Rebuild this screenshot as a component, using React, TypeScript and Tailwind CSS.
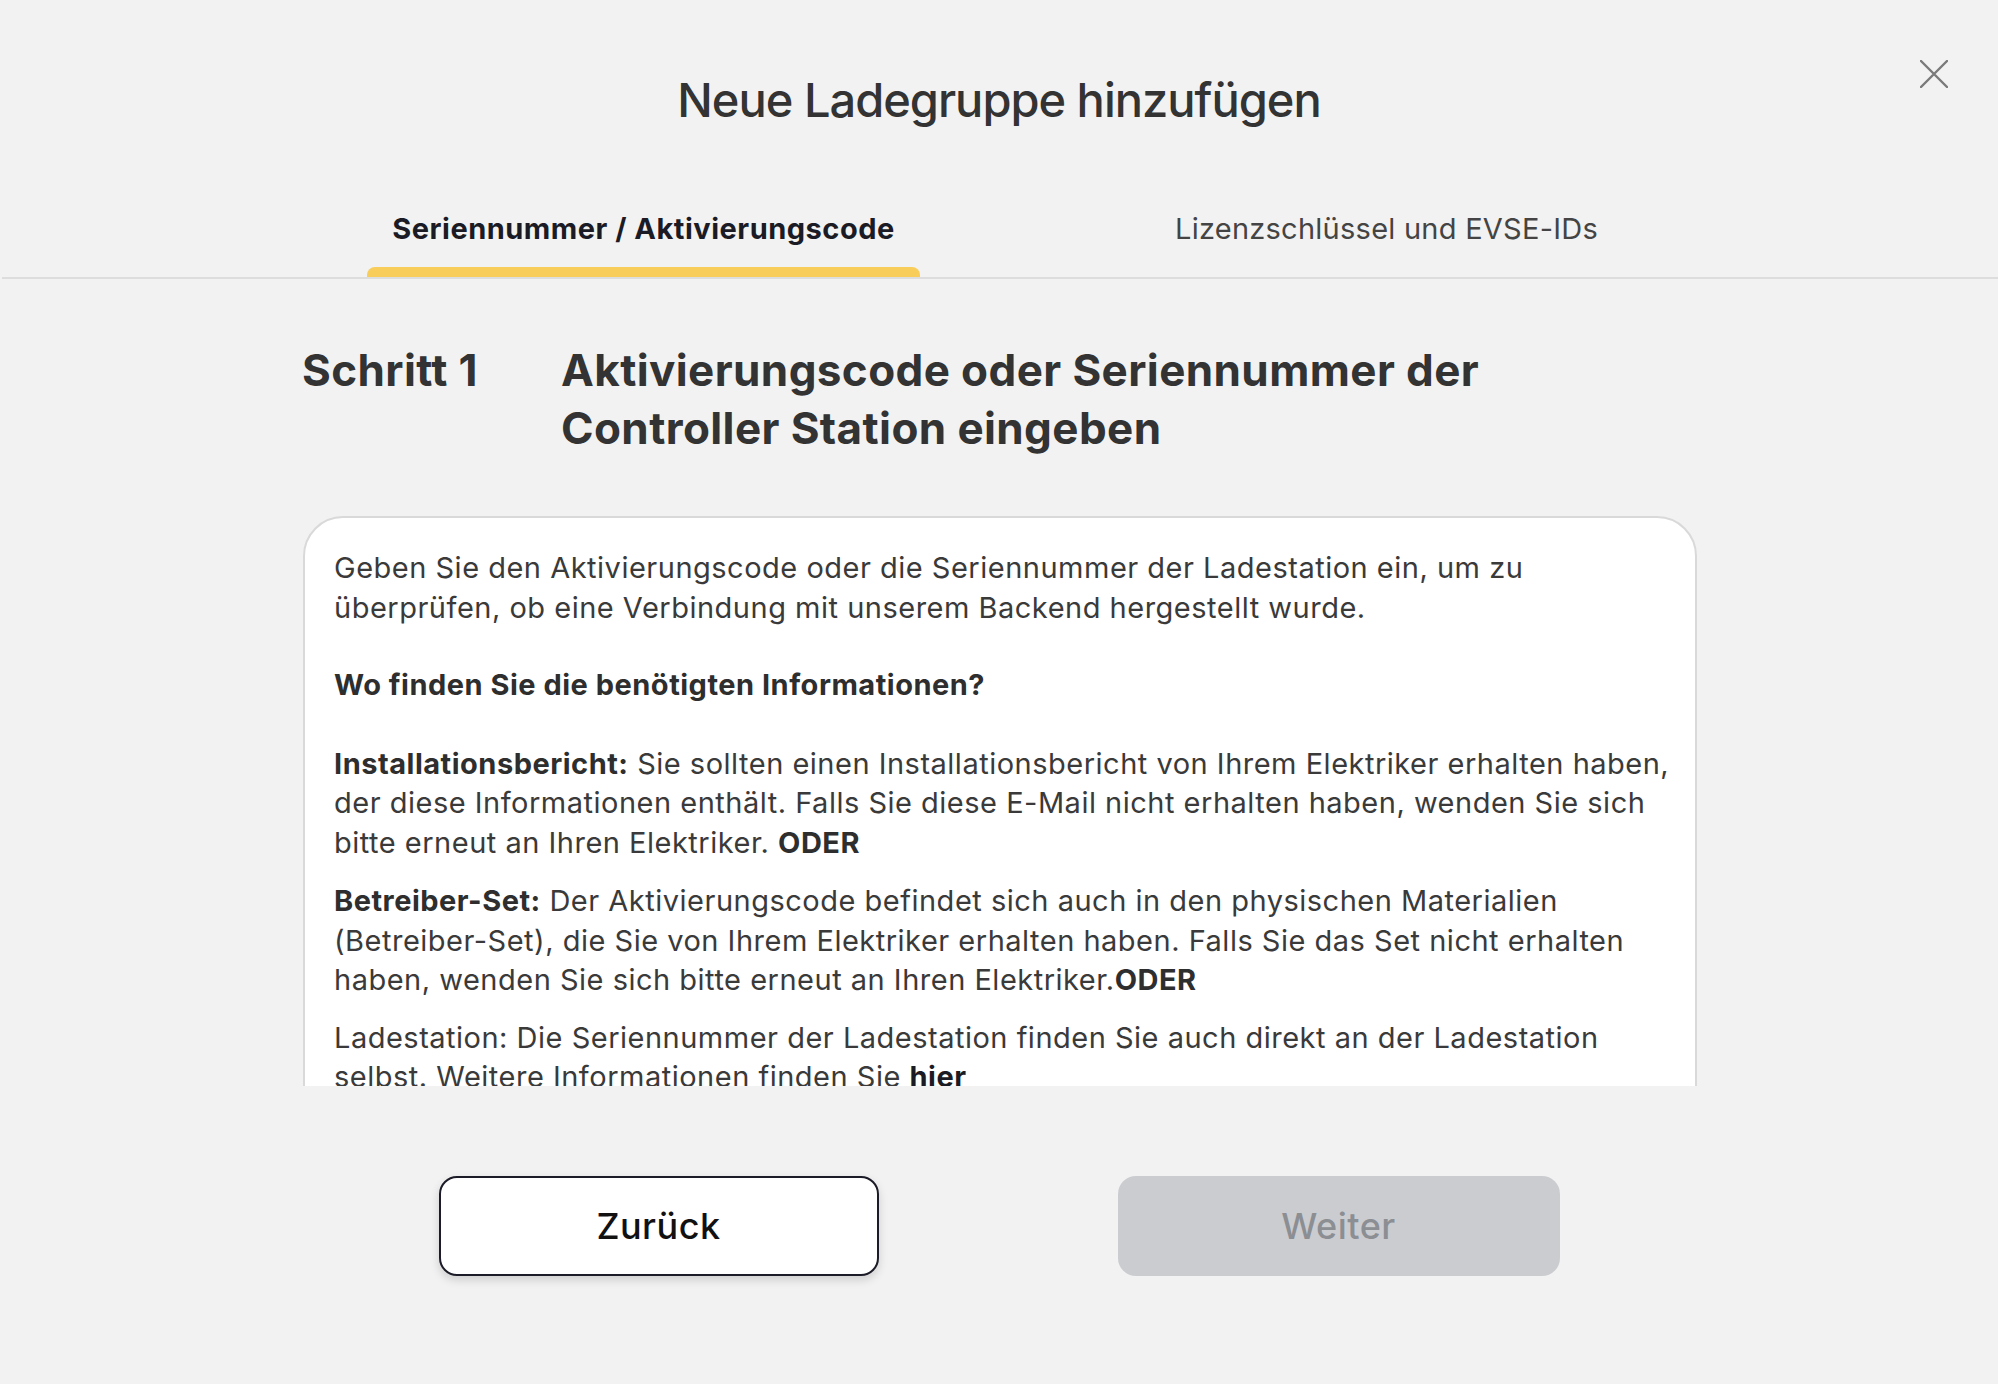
import React from 'react'

// ─────────────────────────────────────────────────────────────────────────────
// Neue Ladegruppe hinzufügen – step 1 of the add-charging-group dialog
// ─────────────────────────────────────────────────────────────────────────────

const font = { fontFamily: 'Inter, "Noto Sans", "Liberation Sans", sans-serif' }

const CloseIcon: React.FC = () => (
  <svg width="28" height="28" viewBox="0 0 28 28" fill="none">
    <path d="M1 1 L27 27 M27 1 L1 27" stroke="#7a7a7a" strokeWidth="2.4" strokeLinecap="round" />
  </svg>
)

const App: React.FC = () => {
  return (
    <div className="relative w-[1998px] h-[1384px] bg-[#f2f2f2] text-[#333333] overflow-hidden" style={font}>
      <button className="absolute top-[60px] right-[50px]">
        <CloseIcon />
      </button>

      {/* title */}
      <h1 className="pt-[72px] text-center text-[47px] leading-[56px] font-medium tracking-[-1px] text-[#333333]">
        Neue Ladegruppe hinzufügen
      </h1>

      {/* tabs */}
      <div className="mt-[83px] ml-[2px] flex border-b-2 border-[#dddddd]">
        <div className="ml-[365px] flex gap-[190px]">
          <div className="w-[553px] flex flex-col items-center">
            <span className="text-[29px] leading-[36px] font-bold tracking-[0.5px] text-[#1b1b25]">
              Seriennummer / Aktivierungscode
            </span>
            <div className="mt-[20px] h-[10px] w-full rounded-t-[8px] bg-[#f8cd5a]" />
          </div>
          <div className="w-[553px] flex flex-col items-center">
            <span className="text-[29px] leading-[36px] font-normal tracking-[0.25px] text-[#444444]">
              Lizenzschlüssel und EVSE-IDs
            </span>
            <div className="mt-[20px] h-[10px]" />
          </div>
        </div>
      </div>

      {/* step header */}
      <div className="mt-[62px] pl-[302px] flex">
        <div className="w-[259px] text-[44px] leading-[58px] font-bold tracking-[0.4px]">Schritt 1</div>
        <h2 className="w-[960px] text-[44px] leading-[58px] font-bold tracking-[0.4px]">
          Aktivierungscode oder Seriennummer der Controller Station eingeben
        </h2>
      </div>

      <div className="mt-[59px] ml-[303px] w-[1394px] h-[570px] overflow-hidden">
        <div className="rounded-[40px] border-2 border-[#d9d9d9] bg-white pl-[29px] pr-[16px] pt-[30px] pb-[40px] text-[29px] leading-[39.5px] tracking-[0.5px] text-[#3a3a3a]">
          <p className="mb-[38px]">
            Geben Sie den Aktivierungscode oder die Seriennummer der Ladestation ein, um zu überprüfen, ob
            eine Verbindung mit unserem Backend hergestellt wurde.
          </p>
          <p className="mb-[39px] font-bold text-[#2e2e2e]">Wo finden Sie die benötigten Informationen?</p>
          <p className="mb-[19px]">
            <b className="text-[#2e2e2e]">Installationsbericht:</b> Sie sollten einen Installationsbericht von
            Ihrem Elektriker erhalten haben, der diese Informationen enthält. Falls Sie diese E-Mail nicht
            erhalten haben, wenden Sie sich bitte erneut an Ihren Elektriker. <b className="text-[#2e2e2e]">ODER</b>
          </p>
          <p className="mb-[18px]">
            <b className="text-[#2e2e2e]">Betreiber-Set:</b> Der Aktivierungscode befindet sich auch in den
            physischen Materialien (Betreiber-Set), die Sie von Ihrem Elektriker erhalten haben. Falls Sie das
            Set nicht erhalten haben, wenden Sie sich bitte erneut an Ihren Elektriker.
            <b className="text-[#2e2e2e]">ODER</b>
          </p>
          <p>
            Ladestation: Die Seriennummer der Ladestation finden Sie auch direkt an der Ladestation selbst.
            Weitere Informationen finden Sie <b className="text-[#1b1b25]">hier</b>
          </p>
        </div>
      </div>

      {/* footer buttons */}
      <div className="mt-[90px] flex justify-center gap-[239px]">
        <button className="w-[440px] h-[100px] rounded-[18px] border-2 border-[#1c1c28] bg-white text-[36px] font-medium tracking-[0.5px] text-[#111111] shadow-[0_4px_10px_rgba(0,0,0,0.15)]">
          Zurück
        </button>
        <button className="w-[442px] h-[100px] rounded-[18px] bg-[#cbccd0] text-[36px] font-medium tracking-[0.5px] text-[#8b8e92]">
          Weiter
        </button>
      </div>
    </div>
  )
}

export default App
